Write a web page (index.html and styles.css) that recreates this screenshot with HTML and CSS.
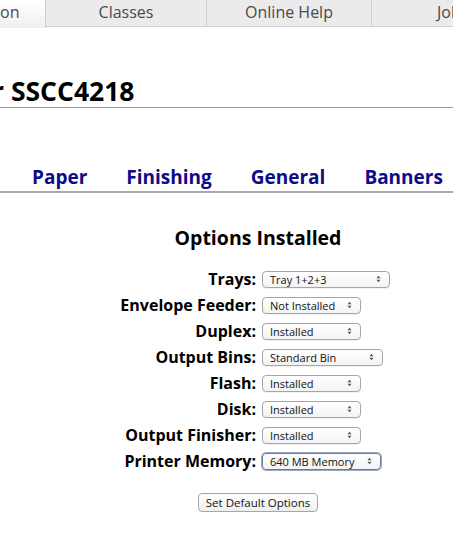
FILE: index.html
```html
<!DOCTYPE html>
<html>
<head>
<meta charset="utf-8">
<link rel="stylesheet" href="styles.css">
</head>
<body>
<nav class="tabs">
  <div class="tab tab-active tab-first">on</div>
  <div class="tab tab-classes">Classes</div>
  <div class="tab tab-help">Online Help</div>
  <div class="tab tab-jobs">Jobs</div>
</nav>
<h1 class="title"><span class="cut">r</span> SSCC4218</h1>
<div class="subnav">
  <a class="sublink">Paper</a>
  <a class="sublink">Finishing</a>
  <a class="sublink">General</a>
  <a class="sublink">Banners</a>
</div>
<main class="main">
  <h2 class="section">Options Installed</h2>
  <div class="form">
    <label class="lbl">Trays:</label>
    <div class="sel w127"><span class="val">Tray 1+2+3</span><svg class="arr" width="5" height="8" viewBox="0 0 5 8"><path d="M0.5 3.2 L2.5 0.8 L4.5 3.2Z M0.5 4.8 L2.5 7.2 L4.5 4.8Z" fill="#555"/></svg></div>
    <label class="lbl">Envelope Feeder:</label>
    <div class="sel w98"><span class="val">Not Installed</span><svg class="arr" width="5" height="8" viewBox="0 0 5 8"><path d="M0.5 3.2 L2.5 0.8 L4.5 3.2Z M0.5 4.8 L2.5 7.2 L4.5 4.8Z" fill="#555"/></svg></div>
    <label class="lbl">Duplex:</label>
    <div class="sel w98"><span class="val">Installed</span><svg class="arr" width="5" height="8" viewBox="0 0 5 8"><path d="M0.5 3.2 L2.5 0.8 L4.5 3.2Z M0.5 4.8 L2.5 7.2 L4.5 4.8Z" fill="#555"/></svg></div>
    <label class="lbl">Output Bins:</label>
    <div class="sel w120"><span class="val">Standard Bin</span><svg class="arr" width="5" height="8" viewBox="0 0 5 8"><path d="M0.5 3.2 L2.5 0.8 L4.5 3.2Z M0.5 4.8 L2.5 7.2 L4.5 4.8Z" fill="#555"/></svg></div>
    <label class="lbl">Flash:</label>
    <div class="sel w98"><span class="val">Installed</span><svg class="arr" width="5" height="8" viewBox="0 0 5 8"><path d="M0.5 3.2 L2.5 0.8 L4.5 3.2Z M0.5 4.8 L2.5 7.2 L4.5 4.8Z" fill="#555"/></svg></div>
    <label class="lbl">Disk:</label>
    <div class="sel w98"><span class="val">Installed</span><svg class="arr" width="5" height="8" viewBox="0 0 5 8"><path d="M0.5 3.2 L2.5 0.8 L4.5 3.2Z M0.5 4.8 L2.5 7.2 L4.5 4.8Z" fill="#555"/></svg></div>
    <label class="lbl">Output Finisher:</label>
    <div class="sel w98"><span class="val">Installed</span><svg class="arr" width="5" height="8" viewBox="0 0 5 8"><path d="M0.5 3.2 L2.5 0.8 L4.5 3.2Z M0.5 4.8 L2.5 7.2 L4.5 4.8Z" fill="#555"/></svg></div>
    <label class="lbl">Printer Memory:</label>
    <div class="sel w118 focus"><span class="val">640 MB Memory</span><svg class="arr" width="5" height="8" viewBox="0 0 5 8"><path d="M0.5 3.2 L2.5 0.8 L4.5 3.2Z M0.5 4.8 L2.5 7.2 L4.5 4.8Z" fill="#555"/></svg></div>
  </div>
  <div class="actions"><button class="btn">Set Default Options</button></div>
</main>
</body>
</html>
```

FILE: styles.css
```css
html, body {
  margin: 0;
  padding: 0;
  background: #fff;
  overflow: hidden;
}
body {
  font-family: "Open Sans", "DejaVu Sans", sans-serif;
  color: #000;
  width: 453px;
}
.tabs {
  display: flex;
  height: 27px;
  box-sizing: border-box;
}
.tab {
  box-sizing: border-box;
  height: 27px;
  font-size: 16px;
  line-height: 25px;
  color: #4a4a4a;
  background: #ebebeb;
  border-bottom: 1px solid #d0d0d0;
  border-right: 1px solid #cfcfcf;
  text-align: center;
  flex: none;
}
.tab-active {
  background: linear-gradient(#ffffff, #f0f0f0);
  border-bottom: none;
  height: 28px;
}
.tab-first {
  width: 46px;
  text-align: left;
  padding-left: 0;
}
.tab-classes { width: 161px; }
.tab-help { width: 165px; }
.tab-jobs {
  flex: 1;
  text-align: left;
  padding-left: 65px;
  border-right: none;
}
.title {
  margin: 49px 0 0;
  font-size: 26.5px;
  line-height: 30px;
  font-weight: 700;
  border-bottom: 1px solid #999;
  white-space: nowrap;
  padding-bottom: 1px;
}
.cut {
  margin-left: -8px;
}
.subnav {
  display: flex;
  gap: 39px;
  padding-left: 32px;
  margin-top: 57px;
  border-bottom: 2px solid #aaa;
  line-height: 25px;
  padding-bottom: 1px;
  white-space: nowrap;
}
.sublink {
  font-size: 19px;
  font-weight: 700;
  color: #0c0c8a;
}
.main {
  width: 516px;
}
.section {
  margin: 33px 0 0;
  font-size: 19.5px;
  line-height: 24px;
  font-weight: 700;
  text-align: center;
}
.form {
  display: grid;
  grid-template-columns: 256px auto;
  column-gap: 6px;
  grid-auto-rows: 26px;
  align-items: center;
  justify-items: start;
  margin-top: 16px;
}
.lbl {
  justify-self: end;
  font-size: 16px;
  font-weight: 700;
  white-space: nowrap;
}
.sel {
  box-sizing: border-box;
  height: 17px;
  display: flex;
  align-items: center;
  justify-content: space-between;
  padding: 0 8px 0 7px;
  border: 1px solid #a6a6a6;
  border-radius: 4px;
  background: linear-gradient(#ffffff, #f3f3f3);
  font-size: 11px;
  color: #111;
  box-shadow: 0 1px 0 rgba(0,0,0,0.05);
}
.w127 { width: 128px; }
.w98 { width: 99px; }
.w120 { width: 121px; }
.w118 { width: 119px; }
.focus {
  border-color: #6b7a99;
  box-shadow: 0 0 0 1px #9aa8c4;
}
.arr { flex: none; }
.actions {
  display: flex;
  justify-content: center;
  margin-top: 19px;
}
.btn {
  font-family: "Open Sans", "DejaVu Sans", sans-serif;
  font-size: 11.5px;
  height: 19px;
  width: 120px;
  padding: 0;
  border: 1px solid #a6a6a6;
  border-radius: 4px;
  background: linear-gradient(#ffffff, #efefef);
  color: #111;
}
```
